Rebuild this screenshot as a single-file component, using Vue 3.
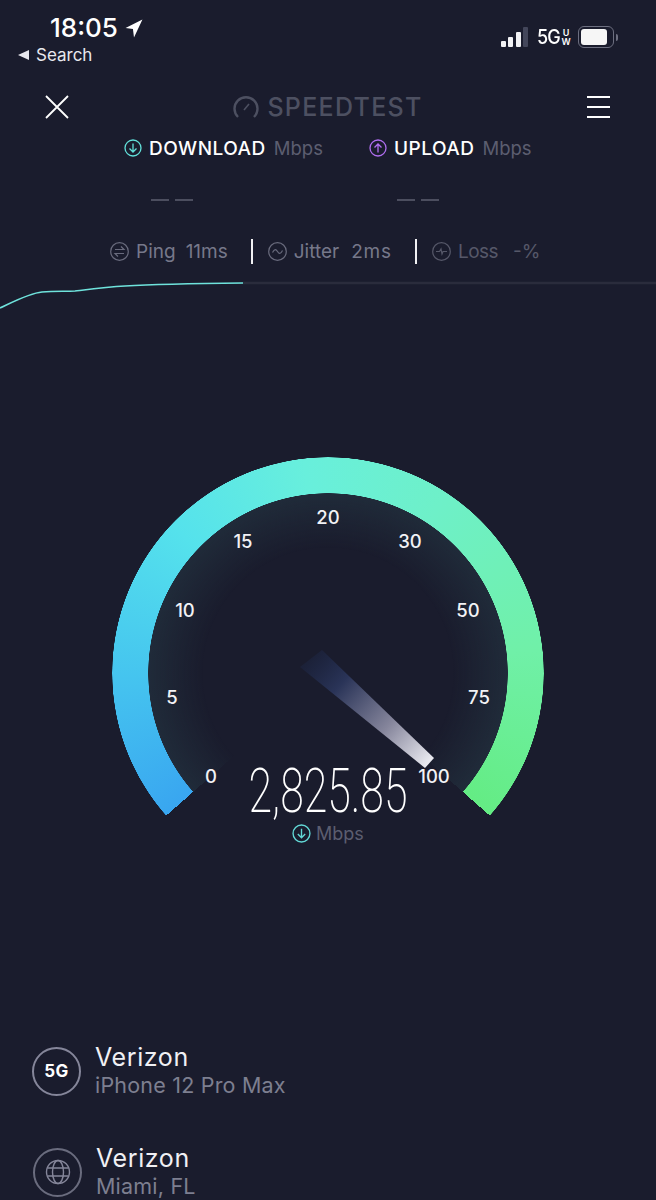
<template>
  <div class="page">
    <!-- status bar -->
    <div class="status">
      <div class="status-left">
        <div class="clock">
          <span>18:05</span>
          <svg width="18" height="19" viewBox="0 0 17 18"><path d="M16.5 0.5 L0.5 8.5 L7.5 9.5 L8.5 17.5 Z" fill="#fff" /></svg>
        </div>
        <div class="back"><i class="back-arrow"></i>Search</div>
      </div>
      <div class="status-right">
        <div class="signal">
          <i style="height: 6px"></i>
          <i style="height: 10px"></i>
          <i style="height: 15px"></i>
          <i class="off" style="height: 20px"></i>
        </div>
        <span class="net">5G</span>
        <span class="uw">U<br />W</span>
        <div class="battery"><i></i></div>
        <i class="nub"></i>
      </div>
    </div>

    <!-- nav -->
    <div class="nav">
      <svg width="24" height="24" viewBox="0 0 24 24"><path d="M1 1 L23 23 M23 1 L1 23" stroke="#fff" stroke-width="1.8" fill="none" /></svg>
      <div class="brand">
        <svg width="26" height="22" viewBox="0 0 26 22" fill="none" stroke="#4d5061" stroke-width="2.4">
          <path d="M5 21 A11.5 11.5 0 1 1 21 21" />
          <path d="M11 14 L16 8" stroke-width="1.6" />
        </svg>
        <span>SPEEDTEST</span>
      </div>
      <div class="burger"><i></i><i></i><i></i></div>
    </div>

    <!-- download / upload -->
    <div class="legend">
      <div class="legend-item">
        <svg class="circle-icon" width="18" height="18" viewBox="0 0 18 18" fill="none" stroke="#62e0da" stroke-width="1.3">
          <circle cx="9" cy="9" r="8" />
          <path d="M9 4.5 V13 M5.5 9.5 L9 13 L12.5 9.5" />
        </svg>
        <span class="legend-name">DOWNLOAD</span>
        <span class="legend-unit">Mbps</span>
      </div>
      <div class="legend-item">
        <svg class="circle-icon" width="18" height="18" viewBox="0 0 18 18" fill="none" stroke="#b06ef0" stroke-width="1.3">
          <circle cx="9" cy="9" r="8" />
          <path d="M9 13.5 V5 M5.5 8.5 L9 5 L12.5 8.5" />
        </svg>
        <span class="legend-name">UPLOAD</span>
        <span class="legend-unit">Mbps</span>
      </div>
    </div>

    <div class="dashes">
      <div class="dash-pair"><i></i><i></i></div>
      <div class="dash-pair"><i></i><i></i></div>
    </div>

    <!-- ping row -->
    <div class="stats">
      <div class="stat stat-ping">
        <svg width="19" height="19" viewBox="0 0 19 19" fill="none" stroke="#696b7d" stroke-width="1.2">
          <circle cx="9.5" cy="9.5" r="8.8" />
          <path d="M5 7.5 H14 L11 4.5 M14 11.5 H5 L8 14.5" />
        </svg>
        <span>Ping</span><span class="stat-val">11ms</span>
      </div>
      <i class="divider"></i>
      <div class="stat stat-jitter">
        <svg width="19" height="19" viewBox="0 0 19 19" fill="none" stroke="#696b7d" stroke-width="1.2">
          <circle cx="9.5" cy="9.5" r="8.8" />
          <path d="M4.5 10.5 C6.5 6.5 8 7 9.5 9.5 C11 12 12.5 12.5 14.5 8.5" />
        </svg>
        <span>Jitter</span><span class="stat-val">2ms</span>
      </div>
      <i class="divider"></i>
      <div class="stat stat-loss">
        <svg width="19" height="19" viewBox="0 0 19 19" fill="none" stroke="#565869" stroke-width="1.2">
          <circle cx="9.5" cy="9.5" r="8.8" />
          <path d="M4 9.5 H7.5 L9 7 L10 12 L11 9.5 H15" />
        </svg>
        <span>Loss</span><span class="stat-val">-%</span>
      </div>
    </div>

    <!-- speed trace -->
    <svg class="trace" width="656" height="30" viewBox="0 0 656 30" fill="none">
      <path d="M243 4 H656" stroke="#2a2c3c" stroke-width="2.5" />
      <path d="M0 29 C15 22 30 14 42 13 C55 12 65 12.5 75 12 C92 10 108 8 125 7 C160 5 200 4.5 243 4" stroke="#6fe3dc" stroke-width="1.6" />
    </svg>

    <!-- gauge -->
    <div class="dial">
      <div class="glow"></div>
      <div class="ring"></div>
      <span
        v-for="t in ticks"
        :key="t.label"
        class="tick"
        :style="{ left: `${t.x}px`, top: `${t.y}px` }"
      >{{ t.label }}</span>
      <svg class="needle" width="432" height="432" viewBox="0 0 432 432">
        <defs>
          <linearGradient id="needleFill" gradientUnits="userSpaceOnUse" x1="200" y1="200" x2="318" y2="306">
            <stop offset="0" stop-color="#1f2b4e" stop-opacity="0.35" />
            <stop offset="0.25" stop-color="#2a3458" />
            <stop offset="0.65" stop-color="#86869c" />
            <stop offset="1" stop-color="#ececf2" />
          </linearGradient>
        </defs>
        <polygon points="210,193 188,210 313,311 322,301" fill="url(#needleFill)" />
      </svg>
      <div class="reading">2,825.85</div>
      <div class="reading-unit">
        <svg width="19" height="19" viewBox="0 0 18 18" fill="none" stroke="#62d8d6" stroke-width="1.3">
          <circle cx="9" cy="9" r="8" />
          <path d="M9 4.5 V13 M5.5 9.5 L9 13 L12.5 9.5" />
        </svg>
        <span>Mbps</span>
      </div>
    </div>

    <!-- carrier + server -->
    <div class="info">
      <div class="info-row">
        <div class="info-icon strong"><b>5G</b></div>
        <div>
          <div class="info-title">Verizon</div>
          <div class="info-sub">iPhone 12 Pro Max</div>
        </div>
      </div>
      <div class="info-row second">
        <div class="info-icon">
          <svg width="26" height="26" viewBox="0 0 26 26" fill="none" stroke="#85869a" stroke-width="1.4">
            <circle cx="13" cy="13" r="11.5" />
            <ellipse cx="13" cy="13" rx="5.5" ry="11.5" />
            <path d="M2.5 9 H23.5 M2.5 17 H23.5" />
          </svg>
        </div>
        <div>
          <div class="info-title">Verizon</div>
          <div class="info-sub">Miami, FL</div>
        </div>
      </div>
    </div>
  </div>
</template>

<script setup>
// positions are relative to the dial box
const ticks = [
  { label: '0', x: 99, y: 319 },
  { label: '5', x: 60, y: 240 },
  { label: '10', x: 73, y: 153 },
  { label: '15', x: 131, y: 84 },
  { label: '20', x: 216, y: 60 },
  { label: '30', x: 298, y: 84 },
  { label: '50', x: 356, y: 153 },
  { label: '75', x: 367, y: 240 },
  { label: '100', x: 322, y: 319 }
];
</script>

<style>
html, body {
  background: #1a1c2d;
}
</style>

<style scoped>
.page {
  width: 656px;
  height: 1200px;
  overflow: hidden;
  background: #1a1c2d;
  color: #fff;
  font-family: Inter, "Noto Sans", sans-serif;
  display: flex;
  flex-direction: column;
}

.status {
  height: 84px;
  padding: 14px 38px 0 18px;
  display: flex;
  justify-content: space-between;
  box-sizing: border-box;
}

.clock {
  display: flex;
  align-items: center;
  gap: 7px;
  margin-left: 32px;
  font-size: 26px;
  line-height: 28px;
  font-weight: 500;
}

.back {
  display: flex;
  align-items: center;
  gap: 7px;
  margin-top: 2px;
  font-size: 17px;
  line-height: 22px;
  color: #e8e8ee;
}

.back-arrow {
  width: 0;
  height: 0;
  border-style: solid;
  border-width: 5.5px 11px 5.5px 0;
  border-color: transparent #e8e8ee transparent transparent;
}

.status-right {
  display: flex;
  align-items: center;
  height: 48px;
  margin-top: -1px;
}

.signal {
  display: flex;
  align-items: flex-end;
  gap: 2.5px;
  height: 20px;
  margin-right: 9px;
}

.signal i {
  width: 5px;
  background: #f2f2f5;
  border-radius: 1px;
}

.signal i.off {
  background: #43465a;
}

.net {
  font-size: 20px;
  font-weight: 500;
  letter-spacing: -1px;
  transform: scaleX(0.9);
  transform-origin: left;
  width: 24px;
}

.uw {
  font-size: 9px;
  line-height: 9.5px;
  font-weight: 600;
  margin-right: 7px;
  width: 10px;
  text-align: center;
}

.battery {
  width: 36px;
  height: 22px;
  box-sizing: border-box;
  border: 1.5px solid #6d6f80;
  border-radius: 6px;
  padding: 2px;
  display: flex;
}

.battery i {
  flex: 1;
  margin-right: 4px;
  background: #f6f6f6;
  border-radius: 3px;
}

.nub {
  width: 2px;
  height: 7px;
  margin-left: 2px;
  background: #6d6f80;
  border-radius: 0 2px 2px 0;
}

.nav {
  display: flex;
  align-items: center;
  justify-content: space-between;
  height: 46px;
  padding: 0 46px 0 45px;
}

.brand {
  display: flex;
  align-items: center;
  gap: 8px;
  color: #4d5061;
  font-size: 25px;
  font-weight: 500;
  letter-spacing: 1.3px;
}

.burger {
  width: 23px;
  display: flex;
  flex-direction: column;
  gap: 8px;
}

.burger i {
  height: 2px;
  background: #fff;
}

.legend {
  display: flex;
  height: 36px;
  padding-left: 124px;
  gap: 46px;
  align-items: center;
}

.legend-item {
  display: flex;
  align-items: center;
}

.legend-name {
  margin-left: 7px;
  font-size: 19px;
  font-weight: 500;
  letter-spacing: 0.5px;
}

.legend-unit {
  margin-left: 8px;
  font-size: 18.5px;
  color: #5c5e70;
}

.dashes {
  display: flex;
  height: 30px;
  margin-top: 19px;
  padding-left: 151px;
  gap: 204px;
  align-items: center;
}

.dash-pair {
  display: flex;
  gap: 6px;
}

.dash-pair i {
  width: 18px;
  height: 2.5px;
  background: #4c4e5f;
}

.stats {
  display: flex;
  align-items: center;
  height: 26px;
  margin-top: 23px;
  padding-left: 110px;
  font-size: 19px;
  color: #76788a;
}

.stat {
  display: flex;
  align-items: center;
  gap: 7px;
}

.stat-val {
  margin-left: 3px;
}

.stat-jitter .stat-val {
  margin-left: 5px;
  letter-spacing: 0.8px;
}

.stat-loss {
  color: #565869;
}

.stat-loss span:first-of-type {
  letter-spacing: -0.5px;
}

.stat-loss .stat-val {
  margin-left: 8px;
}

.divider {
  width: 2px;
  height: 25px;
  background: #f0f0f3;
  margin: 0 15px 0 23px;
}

.trace {
  display: block;
  margin-top: 15px;
}

.dial {
  position: relative;
  width: 432px;
  height: 432px;
  margin: 148px 0 0 112px;
  flex: none;
}

.ring {
  position: absolute;
  inset: 0;
  border-radius: 50%;
  background: conic-gradient(
    from 228.6deg,
    #39a6f0 0deg,
    #45c4ef 40deg,
    #55e2ec 85deg,
    #68efdc 125deg,
    #6ef0c8 165deg,
    #70f0a8 215deg,
    #64ec84 262.8deg,
    transparent 262.8deg
  );
  -webkit-mask: radial-gradient(circle, transparent 179.5px, #000 180px, #000 215.5px, transparent 216px);
  mask: radial-gradient(circle, transparent 179.5px, #000 180px, #000 215.5px, transparent 216px);
}

.glow {
  position: absolute;
  inset: 0;
  border-radius: 50%;
  background: radial-gradient(circle, rgba(44, 72, 82, 0) 125px, rgba(44, 72, 82, 0.35) 180px, transparent 181px);
  -webkit-mask: conic-gradient(from 228.6deg, #000 0deg, #000 262.8deg, transparent 262.8deg);
  mask: conic-gradient(from 228.6deg, #000 0deg, #000 262.8deg, transparent 262.8deg);
}

.tick {
  position: absolute;
  font-size: 18.5px;
  line-height: 20px;
  font-weight: 500;
  color: #f2f2f5;
  transform: translate(-50%, -50%);
}

.needle {
  position: absolute;
  left: 0;
  top: 0;
}

.reading {
  position: absolute;
  left: 216px;
  top: 311px;
  font-family: Roboto, sans-serif;
  font-weight: 200;
  font-size: 62px;
  line-height: 46px;
  white-space: nowrap;
  transform: translateX(-50%) scaleX(0.69);
}

.reading-unit {
  position: absolute;
  left: 180px;
  top: 366px;
  display: flex;
  align-items: center;
  gap: 5px;
  font-size: 18px;
  color: #5c5e70;
}

.info {
  margin-top: 157px;
  padding-left: 32px;
}

.info-row {
  display: flex;
  align-items: center;
  gap: 14px;
  height: 50px;
}

.info-row.second {
  margin-top: 51px;
  margin-left: 1px;
}

.info-icon {
  width: 49px;
  height: 49px;
  box-sizing: border-box;
  border: 2px solid #6a6c7e;
  border-radius: 50%;
  display: flex;
  align-items: center;
  justify-content: center;
  flex: none;
}

.info-icon.strong {
  border-color: #85869a;
}

.info-icon b {
  font-size: 17px;
  font-weight: 700;
  letter-spacing: 0.5px;
}

.info-title {
  font-size: 25px;
  line-height: 28px;
  letter-spacing: 0.6px;
  color: #f0f0f4;
}

.info-sub {
  font-size: 21.5px;
  line-height: 28px;
  letter-spacing: 0.2px;
  color: #7d7f90;
}
</style>
